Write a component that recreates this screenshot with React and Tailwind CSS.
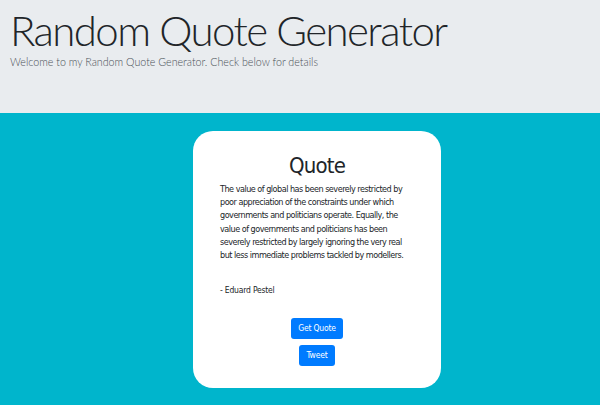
const lines = [
  'The value of global has been severely restricted by',
  'poor appreciation of the constraints under which',
  'governments and politicians operate. Equally, the',
  'value of governments and politicians has been',
  'severely restricted by largely ignoring the very real',
  'but less immediate problems tackled by modellers.',
];

export default function App() {
  return (
    <div className="min-h-[405px] w-[600px] bg-[#00b5cc] overflow-hidden">
      {/* Jumbotron */}
      <header className="h-[113px] bg-[#e9ecef] px-[10px] pt-[6px]">
        <h1 className="text-[42px] leading-[48px] font-light tracking-[-1.6px] text-[#212529] font-['Lato',sans-serif]">
          Random Quote Generator
        </h1>
        <p className="mt-[0px] text-[10.7px] leading-[16px] font-light text-[#495057] font-['Lato',sans-serif]">
          Welcome to my Random Quote Generator. Check below for details
        </p>
      </header>

      {/* Quote card */}
      <main className="pt-[18px]">
        <div className="ml-[193px] w-[248px] h-[257px] bg-white rounded-[20px] px-[27px] pt-[20px] flex flex-col font-['DejaVu_Sans_Condensed','DejaVu_Sans',sans-serif] [font-stretch:condensed] text-[#212529]">
          <h2 className="text-center text-[22px] leading-[30px] tracking-[-0.8px]">Quote</h2>
          <p className="mt-[2px] text-[9px] leading-[13.2px] tracking-[-0.5px] whitespace-nowrap">
            {lines.map((l) => (
              <span key={l} className="block">{l}</span>
            ))}
          </p>
          <p className="mt-[22px] text-[8.5px] leading-[12px] tracking-[-0.2px]">- Eduard Pestel</p>
          <div className="mt-[22px] flex flex-col items-center gap-[6px]">
            <button className="h-[21px] px-[7px] rounded-[3px] bg-[#007bff] text-white text-[8.5px] tracking-[-0.2px]">Get Quote</button>
            <button className="h-[21px] px-[8px] rounded-[3px] bg-[#007bff] text-white text-[8.5px] tracking-[-0.2px]">Tweet</button>
          </div>
        </div>
      </main>
    </div>
  );
}
